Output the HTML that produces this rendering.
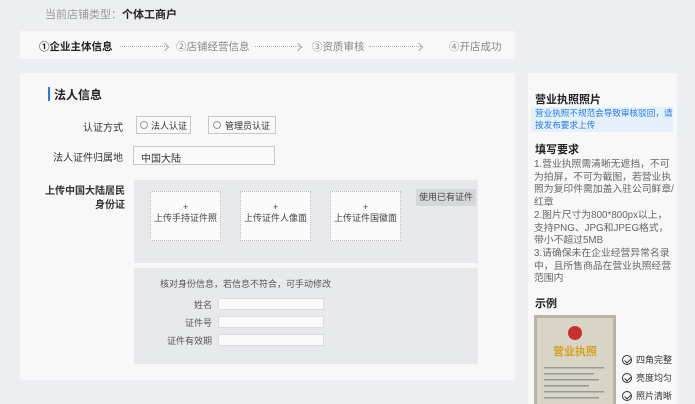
<!DOCTYPE html>
<html><head><meta charset="utf-8"><style>
*{margin:0;padding:0;box-sizing:border-box}
body{width:695px;height:404px;overflow:hidden;background:#eceef2;font-family:"Liberation Sans","Noto Sans CJK SC",sans-serif;position:relative;color:#333}
.a{position:absolute;white-space:nowrap}
.panel{background:#f8f8f9}
.lbl{font-size:10px;color:#333;text-align:right}
.box{border:1px solid #c8c8c8;background:#f8f8f9}
.up{position:absolute;top:191px;width:71px;height:50px;border:1px dotted #bbb;background:#fbfbfc;font-size:9px;color:#444;text-align:center;padding-top:10px;line-height:11px}
.inp{position:absolute;left:218px;width:106px;height:12px;border:1px solid #ddd;background:#fafafa}
.fl{position:absolute;font-size:9px;color:#555;text-align:right;width:60px;left:152px}
.rt{font-size:9.8px;color:#666;line-height:12.7px}
.chk{position:absolute;left:622px;font-size:9px;color:#333;display:flex;align-items:center;gap:4px}
.chk span{width:10px;height:10px;border:1px solid #333;border-radius:50%;display:inline-block;position:relative}
.chk span:after{content:"";position:absolute;left:2.5px;top:1px;width:2.5px;height:4.5px;border:solid #333;border-width:0 1px 1px 0;transform:rotate(45deg)}
.ln{position:absolute;top:46px;height:0;border-top:1px dotted #aaa}
.ln:after{content:"";position:absolute;right:-1px;top:-3.5px;width:5px;height:5px;border:solid #aaa;border-width:1px 1px 0 0;transform:rotate(45deg)}
.st{position:absolute;top:39px;font-size:10.5px;color:#888;white-space:nowrap}
</style></head><body>
<div class="a" style="left:45px;top:6px;font-size:11px;color:#999">当前店铺类型：<b style="color:#222">个体工商户</b></div>
<div class="a panel" style="left:20px;top:31px;width:495px;height:28px"></div>
<div class="st" style="left:39px;color:#222;font-weight:bold">①企业主体信息</div>
<div class="ln" style="left:120px;width:47px"></div>
<div class="st" style="left:176px">②店铺经营信息</div>
<div class="ln" style="left:255px;width:45px"></div>
<div class="st" style="left:312px">③资质审核</div>
<div class="ln" style="left:369px;width:52px"></div>
<div class="st" style="left:449px">④开店成功</div>

<div class="a panel" style="left:20px;top:73px;width:495px;height:307px"></div>
<div class="a" style="left:48px;top:87px;width:2px;height:14px;background:#1f7cf0"></div>
<div class="a" style="left:54px;top:86px;font-size:12px;font-weight:bold;color:#222">法人信息</div>
<div class="a lbl" style="left:60px;top:119px;width:63px">认证方式</div>
<div class="a box" style="left:136px;top:116px;width:55px;height:18px"></div>
<div class="a" style="left:140px;top:121px;width:8px;height:8px;border:1px solid #999;border-radius:50%"></div>
<div class="a" style="left:151px;top:119px;font-size:9px">法人认证</div>
<div class="a box" style="left:208px;top:116px;width:68px;height:18px"></div>
<div class="a" style="left:213px;top:121px;width:8px;height:8px;border:1px solid #999;border-radius:50%"></div>
<div class="a" style="left:225px;top:119px;font-size:9px">管理员认证</div>
<div class="a lbl" style="left:40px;top:149px;width:83px">法人证件归属地</div>
<div class="a box" style="left:133px;top:146px;width:142px;height:19px;background:#fafafa"></div>
<div class="a" style="left:141px;top:150px;font-size:10px">中国大陆</div>

<div class="a lbl" style="left:30px;top:185px;width:95px;line-height:14px;font-weight:bold">上传中国大陆居民<br>身份证</div>
<div class="a" style="left:134px;top:180px;width:344px;height:83px;background:#e8e9ec"></div>
<div class="up" style="left:150px">+<br>上传手持证件照</div>
<div class="up" style="left:240px">+<br>上传证件人像面</div>
<div class="up" style="left:330px">+<br>上传证件国徽面</div>
<div class="a" style="left:416px;top:189px;width:60px;height:17px;background:#d6d7da;font-size:9px;color:#444;text-align:center;line-height:17px">使用已有证件</div>

<div class="a" style="left:134px;top:268px;width:344px;height:96px;background:#e8e9ec"></div>
<div class="a" style="left:160px;top:277px;font-size:9px;color:#555">核对身份信息，若信息不符合，可手动修改</div>
<div class="fl" style="top:298px">姓名</div><div class="inp" style="top:298px"></div>
<div class="fl" style="top:316px">证件号</div><div class="inp" style="top:316px"></div>
<div class="fl" style="top:334px">证件有效期</div><div class="inp" style="top:334px"></div>

<div class="a panel" style="left:528px;top:73px;width:149px;height:331px"></div>
<div class="a" style="left:535px;top:91px;font-size:11px;font-weight:bold;color:#222">营业执照照片</div>
<div class="a" style="left:531px;top:107px;width:142px;height:25px;background:#e6f0fb;font-size:8.6px;color:#1f7cf0;line-height:11.5px;padding:1px 4px">营业执照不规范会导致审核驳回，请<br>按发布要求上传</div>
<div class="a" style="left:535px;top:141px;font-size:11px;font-weight:bold;color:#222">填写要求</div>
<div class="a rt" style="left:534px;top:159px">1.营业执照需清晰无遮挡，不可<br>为拍屏，不可为截图，若营业执<br>照为复印件需加盖入驻公司鲜章/<br>红章<br>2.图片尺寸为800*800px以上，<br>支持PNG、JPG和JPEG格式，<br>带小不超过5MB<br>3.请确保未在企业经营异常名录<br>中，且所售商品在营业执照经营<br>范围内</div>
<div class="a" style="left:535px;top:295px;font-size:11px;font-weight:bold;color:#222">示例</div>
<svg class="a" style="left:534px;top:315px" width="82" height="89" viewBox="0 0 82 89">
<rect width="82" height="89" fill="#b8b4a6"/><rect x="3" y="3" width="76" height="86" fill="#d8d4c6"/>
<circle cx="41" cy="18" r="7" fill="#c9302c"/>
<text x="41" y="40" font-size="11" fill="#d4a020" text-anchor="middle" font-family="Noto Sans CJK SC" font-weight="bold">营业执照</text>
<g fill="#999"><rect x="10" y="52" width="60" height="1.5"/><rect x="10" y="58" width="50" height="1.5"/><rect x="10" y="64" width="55" height="1.5"/><rect x="10" y="70" width="45" height="1.5"/><rect x="10" y="76" width="60" height="1.5"/><rect x="10" y="82" width="55" height="1.5"/></g>
</svg>
<div class="chk" style="top:353px"><span></span>四角完整</div>
<div class="chk" style="top:371px"><span></span>亮度均匀</div>
<div class="chk" style="top:389px"><span></span>照片清晰</div>
</body></html>
